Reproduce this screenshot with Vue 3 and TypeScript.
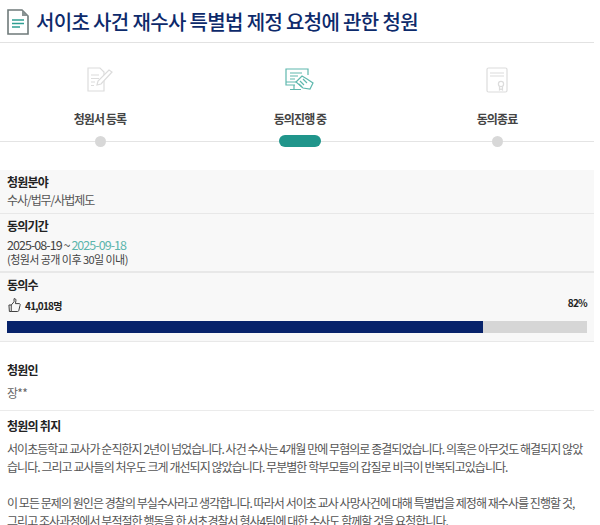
<script setup lang="ts">
const steps = [
  { label: '청원서 등록', active: false },
  { label: '동의진행 중', active: true },
  { label: '동의종료', active: false },
]
</script>

<template>
  <div class="page">
    <header class="head">
      <svg class="doc" width="22" height="26" viewBox="0 0 22 26" fill="none">
        <path d="M1 1H15L21 7V25H1Z" stroke="#6f7a7a" stroke-width="1.6" fill="#fff" />
        <path d="M15 1V7H21Z" fill="#8a9494" />
        <path d="M5 11H17M5 14.5H17M5 18H13" stroke="#2f9e92" stroke-width="1.6" />
      </svg>
      <h1>서이초 사건 재수사 특별법 제정 요청에 관한 청원</h1>
    </header>

    <section class="steps">
      <div class="track"></div>
      <div v-for="(s, i) in steps" :key="s.label" class="step" :class="{ on: s.active }">
        <svg v-if="i === 0" class="ico" width="26" height="26" viewBox="0 0 26 26" fill="none" stroke="#dcdcdc" stroke-width="1.2">
          <path d="M1 1H13L17 5V24H1Z" />
          <path d="M4 8H12M4 11.5H12M4 15H8M4 18.5H7" />
          <path d="M10 18L11 14L22 3L25 5L14 17Z" fill="#fff" />
        </svg>
        <svg v-else-if="i === 1" class="ico" width="30" height="26" viewBox="0 0 30 26" fill="none" stroke="#5fb8ae" stroke-width="1.2">
          <path d="M10 18H1V2H23V8" />
          <path d="M1 15H11M9 18V22M5 22.5H16" />
          <path d="M5 6H17M5 9H13M5 12H10" />
          <path d="M11 15L17 9L22 12L28 16L25 22L18 21Z" fill="#fff" />
          <path d="M15 14L19 18M18 12L22 16M14 17L17 20" />
        </svg>
        <svg v-else class="ico" width="22" height="26" viewBox="0 0 22 26" fill="none" stroke="#dcdcdc" stroke-width="1.2">
          <rect x="1" y="1" width="20" height="24" rx="1.5" />
          <path d="M4 6H18M4 9H18" />
          <circle cx="15" cy="17" r="2.6" />
          <path d="M13.5 19.5V23L15 22L16.5 23V19.5" />
        </svg>
        <div class="label">{{ s.label }}</div>
        <div class="mark"></div>
      </div>
    </section>

    <section class="info field">
      <h2>청원분야</h2>
      <p>수사/법무/사법제도</p>
    </section>
    <section class="info period">
      <h2>동의기간</h2>
      <p class="dates">2025-08-19 ~ <span class="end">2025-09-18</span></p>
      <p class="note">(청원서 공개 이후 30일 이내)</p>
    </section>
    <section class="info count">
      <h2>동의수</h2>
      <div class="stat">
        <span class="num">
          <svg class="thumb" width="13" height="16" viewBox="0 0 14 16" fill="none" stroke="#333" stroke-width="1">
            <path d="M1 8H3.5V15H1.5Z" />
            <path d="M3.5 8L6.5 4.5V1.2C8 .8 8.8 2 8.5 3.5L8 6.5H12C13 6.5 13.4 7.5 13 8.3L11.6 14C11.4 14.7 11 15 10.2 15H3.5" />
          </svg>
          41,018명
        </span>
        <span class="pct">82%</span>
      </div>
      <div class="bar"><div class="fill" :style="{ width: '82%' }"></div></div>
    </section>

    <section class="author">
      <h2>청원인</h2>
      <p>장**</p>
    </section>

    <section class="body">
      <h2>청원의 취지</h2>
      <p>서이초등학교 교사가 순직한지 2년이 넘었습니다. 사건 수사는 4개월 만에 무혐의로 종결되었습니다. 의혹은 아무것도 해결되지 않았<br />습니다. 그리고 교사들의 처우도 크게 개선되지 않았습니다. 무분별한 학부모들의 갑질로 비극이 반복되고있습니다.</p>
      <p class="gap">이 모든 문제의 원인은 경찰의 부실수사라고 생각합니다. 따라서 서이초 교사 사망사건에 대해 특별법을 제정해 재수사를 진행할 것,<br />그리고 조사과정에서 부적절한 행동을 한 서초경찰서 형사4팀에 대한 수사도 함께할 것을 요청합니다.</p>
    </section>
  </div>
</template>

<style>
html, body { margin: 0; background: #fff; overflow: hidden; }
</style>

<style scoped>
.page {
  width: 594px;
  height: 525px;
  overflow: hidden;
  font-family: "Noto Sans CJK KR", "Noto Sans", sans-serif;
  font-size: 12px;
  color: #555;
  letter-spacing: -0.75px;
}
.head {
  height: 42px;
  display: flex;
  align-items: center;
  gap: 7px;
  padding-left: 7px;
  border-bottom: 1px solid #e2e2e2;
  box-sizing: content-box;
}
.doc { flex: none; margin-top: 2px; }
h1 {
  margin: 0;
  font-size: 20px;
  font-weight: 500;
  color: #0d2a6b;
  letter-spacing: -0.65px;
  white-space: nowrap;
}
.steps {
  position: relative;
  height: 127px;
  display: grid;
  grid-template-columns: 200px 200px 194px;
}
.track {
  position: absolute;
  left: 0;
  right: 0;
  top: 98px;
  height: 1px;
  background: #e4e4e4;
}
.step {
  position: relative;
  display: flex;
  flex-direction: column;
  align-items: center;
}
.ico { height: 26px; margin-top: 24px; }
.label {
  margin-top: 17px;
  height: 18px;
  line-height: 18px;
  font-size: 12px;
  font-weight: 700;
  color: #444;
  letter-spacing: -0.9px;
}
.mark {
  width: 11px;
  height: 11px;
  border-radius: 50%;
  background: #d8d8d8;
  margin-top: 8px;
}
.on .mark {
  width: 42px;
  height: 12px;
  border-radius: 6px;
  background: #20958b;
  margin-top: 7px;
}
.info {
  background: #f8f8f8;
  padding: 3px 7px 0;
  box-sizing: border-box;
  height: 44px;
  border-bottom: 1px solid #e8e8e8;
}
.field p { letter-spacing: -1.05px; }
.period { height: 59px; border-bottom-width: 2px; }
.count { height: 69px; }
h2 {
  margin: 0;
  font-size: 12px;
  line-height: 18px;
  font-weight: 700;
  color: #222;
}
p {
  margin: 0;
  line-height: 18px;
  font-size: 12px;
  color: #555;
  white-space: nowrap;
}
.period .dates { color: #444; line-height: 15px; margin-top: 2px; font-size: 12.5px; letter-spacing: -0.95px; }
.period .note { color: #444; font-size: 11px; margin-top: 0; line-height: 14px; letter-spacing: -0.55px; }
.end { color: #5bb5ac; }
.stat {
  display: flex;
  justify-content: space-between;
  align-items: center;
  height: 18px;
  margin-top: 2px;
}
.num {
  display: inline-flex;
  align-items: center;
  gap: 4px;
  font-size: 10px;
  font-weight: 700;
  color: #222;
}
.thumb { margin-left: 1px; }
.pct { font-size: 10px; font-weight: 700; color: #222; margin-top: -6px; }
.bar {
  height: 12px;
  width: 580px;
  margin-top: 7px;
  background: #d6d6d6;
}
.fill {
  height: 100%;
  background: #07226a;
}
.author {
  height: 69px;
  box-sizing: border-box;
  padding: 19px 7px 0;
  border-bottom: 1px solid #ebebeb;
}
.author p { margin-top: 5px; color: #666; }
.body { padding: 6px 7px 0; }
.body h2 { margin-bottom: 5px; }
.body p { line-height: 18px; color: #555; font-size: 12px; letter-spacing: -0.95px; }
.gap { margin-top: 18px; }
</style>
